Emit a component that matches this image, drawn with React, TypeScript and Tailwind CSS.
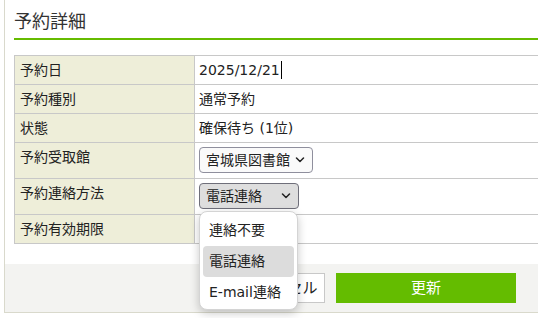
import React from "react";

function Chevron() {
  return (
    <svg width="10" height="6" viewBox="0 0 10 6" fill="none">
      <polyline points="1.5,1 5,4.5 8.5,1" stroke="#222" strokeWidth="1.5" strokeLinecap="round" strokeLinejoin="round" />
    </svg>
  );
}

export default function App() {
  return (
    <div className="relative w-[538px] h-[318px] overflow-hidden bg-white text-[#222] font-['DejaVu_Sans','Noto_Sans_CJK_JP',sans-serif]">
      <div className="ml-[4px] w-[580px] border-l border-b border-[#d9d9cc]">
        <div className="pl-[9px]">
          <div className="pt-[10px] mb-[4px] text-[18px] leading-[24px] text-[#333]">予約詳細</div>
          <div className="h-[2px] bg-[#66bb00]" />
          <div className="mt-[15px] border-t border-l border-[#c8c8c8] text-[14px]">
            <div className="flex border-b border-[#c8c8c8]">
              <div className="w-[180px] shrink-0 border-r border-[#c8c8c8] bg-[#eeeed9] px-[5px] py-[5px] leading-[18px]">予約日</div>
              <div className="flex-1 pl-[4px] py-[5px] leading-[18px] flex items-center">
                <span>2025/12/21</span>
                <span className="ml-[1px] w-[1px] h-[18px] bg-black" />
              </div>
            </div>
            <div className="flex border-b border-[#c8c8c8]">
              <div className="w-[180px] shrink-0 border-r border-[#c8c8c8] bg-[#eeeed9] px-[5px] py-[5px] leading-[18px]">予約種別</div>
              <div className="flex-1 pl-[4px] py-[5px] leading-[18px]">通常予約</div>
            </div>
            <div className="flex border-b border-[#c8c8c8]">
              <div className="w-[180px] shrink-0 border-r border-[#c8c8c8] bg-[#eeeed9] px-[5px] py-[5px] leading-[18px]">状態</div>
              <div className="flex-1 pl-[4px] py-[5px] leading-[18px]">確保待ち (1位)</div>
            </div>
            <div className="flex border-b border-[#c8c8c8]">
              <div className="w-[180px] shrink-0 border-r border-[#c8c8c8] bg-[#eeeed9] px-[5px] py-[5px] leading-[18px]">予約受取館</div>
              <div className="flex-1 pl-[4px] pt-[4px] pb-[5px]">
                <div className="flex items-center justify-between w-[114px] h-[26px] border border-[#8f8f9d] rounded-[4px] bg-[#fafafa] pl-[6px] pr-[7px] leading-[18px]">
                  <span>宮城県図書館</span>
                  <Chevron />
                </div>
              </div>
            </div>
            <div className="flex border-b border-[#c8c8c8]">
              <div className="w-[180px] shrink-0 border-r border-[#c8c8c8] bg-[#eeeed9] px-[5px] py-[5px] leading-[18px]">予約連絡方法</div>
              <div className="flex-1 pl-[4px] pt-[4px] pb-[5px]">
                <div className="flex items-center justify-between w-[100px] h-[26px] border border-[#6f6f7a] rounded-[4px] bg-[#dedede] pl-[6px] pr-[7px] leading-[18px]">
                  <span>電話連絡</span>
                  <Chevron />
                </div>
              </div>
            </div>
            <div className="flex border-b border-[#c8c8c8]">
              <div className="w-[180px] shrink-0 border-r border-[#c8c8c8] bg-[#eeeed9] px-[5px] py-[5px] leading-[18px]">予約有効期限</div>
              <div className="flex-1 pl-[4px] py-[5px] leading-[18px]"></div>
            </div>
          </div>
        </div>
        <div className="mt-[20px] h-[48px] bg-[#f3f3f1] pt-[9px] flex">
          <div className="ml-[230px] w-[90px] h-[30px] border border-[#c8c8c8] bg-white flex items-center justify-center text-[15px]">キャンセル</div>
          <div className="ml-[11px] w-[180px] h-[30px] bg-[#64bc00] flex items-center justify-center text-[15px] text-white">更新</div>
        </div>
      </div>

      <div className="absolute left-[199px] top-[211px] w-[99px] h-[99px] rounded-[8px] bg-white border border-[#d4d4d4] shadow-[0_3px_10px_rgba(0,0,0,0.22)] p-[3px] text-[14px]">
        <div className="h-[31px] flex items-center pl-[6px] rounded-[4px]">連絡不要</div>
        <div className="h-[31px] flex items-center pl-[6px] rounded-[4px] bg-[#dcdcdc]">電話連絡</div>
        <div className="h-[31px] flex items-center pl-[6px] rounded-[4px]">E-mail連絡</div>
      </div>
    </div>
  );
}
